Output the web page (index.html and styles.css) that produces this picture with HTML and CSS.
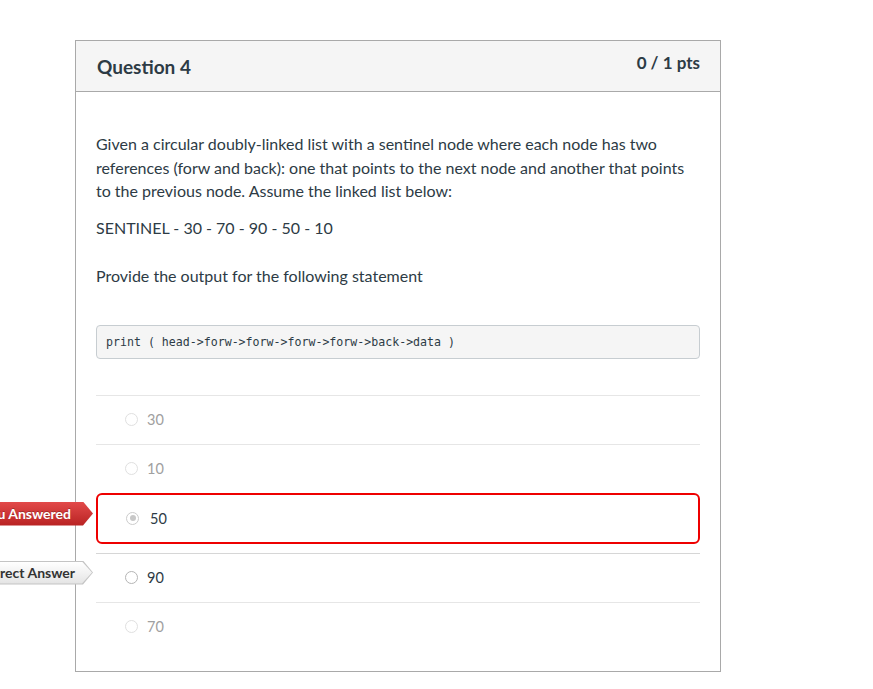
FILE: index.html
```html
<!DOCTYPE html>
<html>
<head>
<meta charset="utf-8">
<link rel="stylesheet" href="styles.css">
</head>
<body>
<div class="card">
  <div class="card-header">
    <h2 class="title">Question 4</h2>
    <div class="pts">0 / 1 pts</div>
  </div>
  <div class="card-body">
    <p class="para">Given a circular doubly-linked list with a sentinel node where each node has two references (forw and back): one that points to the next node and another that points to the previous node. Assume the linked list below:</p>
    <p class="para list-line">SENTINEL - 30 - 70 - 90 - 50 - 10</p>
    <p class="para prompt">Provide the output for the following statement</p>
    <pre class="code">print ( head-&gt;forw-&gt;forw-&gt;forw-&gt;forw-&gt;back-&gt;data )</pre>
    <div class="answers">
      <div class="answer"><span class="radio"></span><span class="label">30</span></div>
      <div class="answer"><span class="radio"></span><span class="label">10</span></div>
      <div class="answer selected">
        <span class="badge badge-wrong">You Answered</span>
        <span class="radio radio-checked"></span><span class="label">50</span>
      </div>
      <div class="answer correct">
        <span class="badge badge-correct"><span class="badge-text">Correct Answer</span></span>
        <span class="radio radio-dark"></span><span class="label">90</span>
      </div>
      <div class="answer"><span class="radio"></span><span class="label">70</span></div>
    </div>
  </div>
</div>
</body>
</html>
```
FILE: styles.css
```css
html, body {
  margin: 0;
  padding: 0;
  background: #ffffff;
}
body {
  font-family: Lato, "Open Sans", sans-serif;
  color: #2d3b45;
  overflow: hidden;
}
.card {
  margin: 40px 0 0 75px;
  width: 644px;
  border: 1px solid #a9a9a9;
}
.card-header {
  background: #f5f5f5;
  border-bottom: 1px solid #a9a9a9;
  height: 51px;
  display: flex;
  justify-content: space-between;
  align-items: flex-start;
  padding: 0 20px 0 21px;
  box-sizing: border-box;
}
.title {
  margin: 14px 0 0 0;
  font-size: 19px;
  font-weight: 700;
  line-height: 24px;
}
.pts {
  margin-top: 10px;
  font-size: 17px;
  font-weight: 700;
  line-height: 24px;
  color: #2d3b45;
}
.card-body {
  padding: 40px 20px 20px 20px;
}
.para {
  margin: 0;
  font-size: 16px;
  line-height: 23.5px;
}
.list-line {
  margin-top: 13px;
}
.prompt {
  margin-top: 25px;
}
.code {
  margin: 37px 0 0 0;
  height: 32px;
  box-sizing: content-box;
  padding: 0 9px;
  background: #f5f5f5;
  border: 1px solid #c7cdd1;
  border-radius: 4px;
  font-family: "DejaVu Sans Mono", monospace;
  font-size: 11.6px;
  line-height: 32px;
  color: #2d3b45;
}
.answers {
  margin-top: 36px;
}
.answer {
  position: relative;
  height: 48px;
  border-top: 1px solid #e6e6e6;
  display: flex;
  align-items: center;
  padding-left: 29px;
}
.answer.selected {
  height: 47px;
  border: 2px solid #ee0000;
  border-radius: 6px;
  margin-bottom: 9px;
  padding-left: 28px;
}
.answer.correct {
  border-top-color: #d6d6d6;
}
.radio {
  width: 13px;
  height: 13px;
  border: 1px solid #e0e0e0;
  border-radius: 50%;
  box-sizing: border-box;
  margin-right: 9px;
  flex: none;
  position: relative;
}
.radio-dark {
  border-color: #b5b5b5;
}
.radio-checked {
  border-color: #cccccc;
  margin-right: 11px;
}
.radio-checked::after {
  content: "";
  position: absolute;
  left: 2.5px;
  top: 2.5px;
  width: 6px;
  height: 6px;
  border-radius: 50%;
  background: #c8c8c8;
}
.label {
  font-size: 14.5px;
  color: #a0a0a0;
}
.selected .label,
.correct .label {
  color: #2d3b45;
}
.badge {
  position: absolute;
  right: calc(100% + 3px);
  height: 24px;
  line-height: 24px;
  font-size: 14px;
  font-weight: 700;
  white-space: nowrap;
  box-sizing: border-box;
  clip-path: polygon(0 0, calc(100% - 10px) 0, 100% 50%, calc(100% - 10px) 100%, 0 100%);
}
.badge-wrong {
  top: 7px;
  padding: 0 22px 0 10px;
  color: #ffffff;
  background: linear-gradient(#e24a4a, #b82222);
  text-shadow: 0 -1px 0 rgba(0, 0, 0, 0.25);
  right: calc(100% + 5px);
}
.badge-correct {
  top: 7px;
  background: #c4c4c4;
  padding: 1px 18px 1px 1px;
  width: auto;
}
.badge-correct::before {
  content: "";
  position: absolute;
  left: 1px;
  top: 1px;
  right: 1px;
  bottom: 1px;
  background: linear-gradient(#ffffff, #e4e4e4);
  clip-path: polygon(0 0, calc(100% - 10px) 0, 100% 50%, calc(100% - 10px) 100%, 0 100%);
}
.badge-text {
  position: relative;
  display: block;
  line-height: 22px;
  padding-left: 9px;
  color: #333333;
}
```
